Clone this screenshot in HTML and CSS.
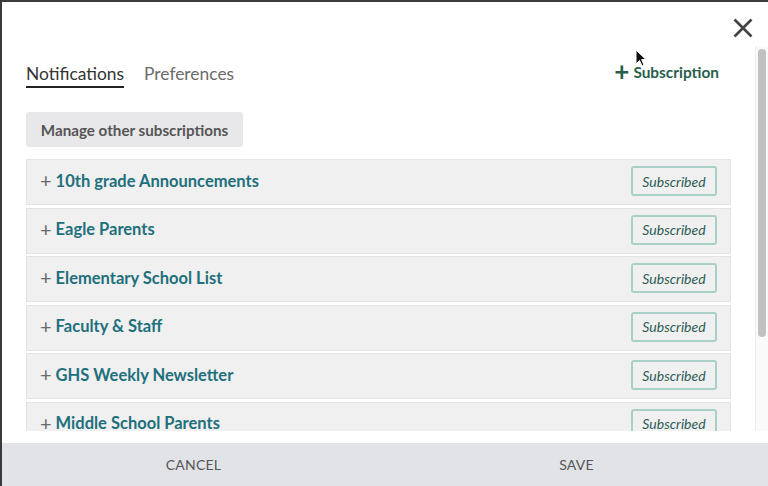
FILE: index.html
```html
<!DOCTYPE html>
<html>
<head>
<meta charset="utf-8">
<link rel="stylesheet" href="styles.css">
</head>
<body>
<div class="modal">
  <div class="modal-header">
    <button class="close" aria-label="Close">
      <svg width="20" height="20" viewBox="0 0 20 20"><path d="M1.5 1.5 L18.5 18.5 M18.5 1.5 L1.5 18.5" stroke="#444" stroke-width="2.6" fill="none"/></svg>
    </button>
  </div>
  <div class="body">
    <div class="content">
      <div class="tabs-row">
        <div class="tabs">
          <span class="tab active">Notifications</span>
          <span class="tab">Preferences</span>
        </div>
        <a class="add-sub"><span class="add-plus">+</span>Subscription</a>
      </div>
      <button class="manage">Manage other subscriptions</button>
      <ul class="list">
        <li class="row"><span class="name"><span class="plus">+</span>10th grade Announcements</span><span class="badge">Subscribed</span></li>
        <li class="row"><span class="name"><span class="plus">+</span>Eagle Parents</span><span class="badge">Subscribed</span></li>
        <li class="row"><span class="name"><span class="plus">+</span>Elementary School List</span><span class="badge">Subscribed</span></li>
        <li class="row"><span class="name"><span class="plus">+</span>Faculty &amp; Staff</span><span class="badge">Subscribed</span></li>
        <li class="row"><span class="name"><span class="plus">+</span>GHS Weekly Newsletter</span><span class="badge">Subscribed</span></li>
        <li class="row"><span class="name"><span class="plus">+</span>Middle School Parents</span><span class="badge">Subscribed</span></li>
      </ul>
    </div>
    <div class="scrollbar"><div class="thumb"></div></div>
  </div>
  <div class="spacer"></div>
  <div class="footer">
    <button class="foot-btn">CANCEL</button>
    <button class="foot-btn">SAVE</button>
  </div>
  <svg class="cursor" width="12" height="19" viewBox="0 0 12 19"><path d="M1 1 L1 15 L4.5 11.5 L7 17 L9 16 L6.6 10.6 L11 10.6 Z" fill="#111" stroke="#fff" stroke-width="1"/></svg>
</div>
</body>
</html>
```
FILE: styles.css
```css
* { box-sizing: border-box; }
html, body { margin: 0; padding: 0; }
body {
  width: 768px;
  height: 486px;
  overflow: hidden;
  background: #fff;
  font-family: Lato, "Open Sans", "Liberation Sans", sans-serif;
}
.modal {
  position: relative;
  width: 768px;
  height: 486px;
  border-top: 2px solid #3a3a3a;
  border-left: 2px solid #3a3a3a;
  background: #fff;
  display: flex;
  flex-direction: column;
}
.modal-header {
  height: 44px;
  flex: none;
  display: flex;
  justify-content: flex-end;
  align-items: flex-start;
}
.close {
  margin: 16px 15px 0 0;
  padding: 0;
  border: 0;
  background: none;
  width: 20px;
  height: 20px;
  display: block;
}
.close svg { display: block; }
.body {
  height: 385px;
  flex: none;
  display: flex;
  overflow: hidden;
}
.content {
  flex: 1;
  padding: 18px 24px 0 24px;
  overflow: hidden;
}
.tabs-row {
  display: flex;
  justify-content: space-between;
  align-items: flex-start;
}
.tabs { display: flex; gap: 20px; }
.tab {
  font-size: 17.4px;
  line-height: 20px;
  color: #6a6a6a;
  padding-bottom: 2px;
  border-bottom: 2px solid transparent;
}
.tab.active {
  color: #333;
  border-bottom-color: #222;
}
.add-sub {
  margin: 0 12px 0 0;
  font-size: 15.4px;
  font-weight: 700;
  color: #285f4b;
  line-height: 16px;
  display: flex;
  align-items: center;
}
.add-plus {
  font-size: 26px;
  font-weight: 700;
  line-height: 16px;
  margin-right: 4px;
  position: relative;
  top: -1px;
}
.manage {
  display: block;
  margin-top: 24px;
  height: 35px;
  width: 217px;
  border: 0;
  border-radius: 3px;
  background: #e8e8ea;
  color: #555;
  font-family: inherit;
  font-size: 15.2px;
  font-weight: 700;
  padding: 0;
}
.list {
  list-style: none;
  margin: 12px 0 0 0;
  padding: 0;
}
.row {
  height: 46px;
  margin-bottom: 2.6px;
  background: #f0f0f0;
  border: 1px solid #e3e3e5;
  display: flex;
  align-items: center;
  justify-content: space-between;
  padding: 0 13px 0 13px;
}
.name {
  font-size: 16.5px;
  font-weight: 700;
  color: #216f7c;
  display: flex;
  align-items: center;
  position: relative;
  top: -1.5px;
}
.plus {
  color: #6a6a6a;
  font-weight: 400;
  font-size: 20px;
  margin-right: 4px;
  position: relative;
  top: -0.5px;
}
.badge {
  width: 86px;
  height: 30px;
  border: 2px solid #a8d0c7;
  border-radius: 3px;
  font-size: 14px;
  font-style: italic;
  color: #2b5b55;
  display: flex;
  align-items: center;
  justify-content: center;
  position: relative;
  top: -1px;
}
.scrollbar {
  width: 13px;
  flex: none;
  background: #fafafa;
  border-left: 1px solid #ececec;
  padding: 3px 2px 0 2px;
}
.thumb {
  width: 8px;
  height: 288px;
  border-radius: 4px;
  background: #c1c1c1;
}
.spacer { height: 12px; flex: none; }
.footer {
  flex: 1;
  background: #e2e3e6;
  display: flex;
}
.foot-btn {
  flex: 1;
  border: 0;
  background: none;
  font-family: inherit;
  font-size: 14px;
  color: #555;
  padding: 0;
  letter-spacing: 0.2px;
}
.cursor {
  position: absolute;
  left: 633px;
  top: 47px;
}
```
